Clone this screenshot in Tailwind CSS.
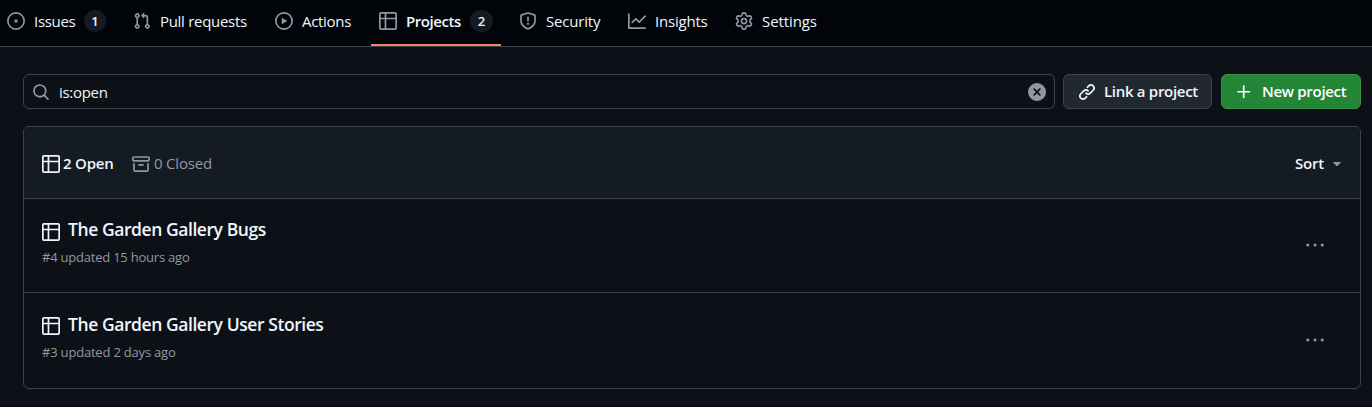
<!DOCTYPE html>
<html lang="en">
<head>
<meta charset="utf-8">
<title>Projects</title>
<script src="https://cdn.jsdelivr.net/npm/@tailwindcss/browser@4"></script>
</head>
<body class="h-[407px] w-[1372px] overflow-hidden border-b border-[#010409] bg-[#0d1117] font-['Open_Sans','Noto_Sans',sans-serif] text-[15px] text-[#f0f6fc]">
<svg class="hidden">
  <symbol id="issue" viewBox="0 0 16 16"><path d="M8 9.5a1.5 1.5 0 1 0 0-3 1.5 1.5 0 0 0 0 3Z"/><path d="M8 0a8 8 0 1 1 0 16A8 8 0 0 1 8 0ZM1.5 8a6.5 6.5 0 1 0 13 0 6.5 6.5 0 0 0-13 0Z"/></symbol>
  <symbol id="pull" viewBox="0 0 16 16"><path d="M1.5 3.25a2.25 2.25 0 1 1 3 2.122v5.256a2.251 2.251 0 1 1-1.5 0V5.372A2.25 2.25 0 0 1 1.5 3.25Zm5.677-.177L9.573.677A.25.25 0 0 1 10 .854V2.5h1A2.5 2.5 0 0 1 13.5 5v5.628a2.251 2.251 0 1 1-1.5 0V5a1 1 0 0 0-1-1h-1v1.646a.25.25 0 0 1-.427.177L7.177 3.427a.25.25 0 0 1 0-.354ZM3.75 2.5a.75.75 0 1 0 0 1.5.75.75 0 0 0 0-1.5Zm0 9.5a.75.75 0 1 0 0 1.5.75.75 0 0 0 0-1.5Zm8.25.75a.75.75 0 1 0 1.5 0 .75.75 0 0 0-1.5 0Z"/></symbol>
  <symbol id="play" viewBox="0 0 16 16"><path d="M8 0a8 8 0 1 1 0 16A8 8 0 0 1 8 0ZM1.5 8a6.5 6.5 0 1 0 13 0 6.5 6.5 0 0 0-13 0Zm4.879-2.773 4.264 2.559a.25.25 0 0 1 0 .428l-4.264 2.559A.25.25 0 0 1 6 10.559V5.442a.25.25 0 0 1 .379-.215Z"/></symbol>
  <symbol id="table" viewBox="0 0 16 16"><path d="M0 1.75C0 .784.784 0 1.75 0h12.5C15.216 0 16 .784 16 1.75v12.5A1.75 1.75 0 0 1 14.25 16H1.75A1.75 1.75 0 0 1 0 14.25ZM6.5 6.5v8h7.75a.25.25 0 0 0 .25-.25V6.5Zm8-1.5V1.75a.25.25 0 0 0-.25-.25H6.5V5Zm-13 1.5v7.75c0 .138.112.25.25.25H5v-8ZM5 5V1.5H1.75a.25.25 0 0 0-.25.25V5Z"/></symbol>
  <symbol id="shield" viewBox="0 0 16 16"><path d="M7.467.133a1.748 1.748 0 0 1 1.066 0l5.25 1.68A1.75 1.75 0 0 1 15 3.48V7c0 1.566-.32 3.182-1.303 4.682-.983 1.498-2.585 2.813-5.032 3.855a1.697 1.697 0 0 1-1.33 0c-2.447-1.042-4.049-2.357-5.032-3.855C1.32 10.182 1 8.566 1 7V3.48a1.75 1.75 0 0 1 1.217-1.667Zm.61 1.429a.25.25 0 0 0-.153 0l-5.25 1.68a.25.25 0 0 0-.174.238V7c0 1.358.275 2.666 1.057 3.86.784 1.194 2.121 2.34 4.366 3.297a.196.196 0 0 0 .154 0c2.245-.956 3.582-2.104 4.366-3.298C13.225 9.666 13.5 8.36 13.5 7V3.48a.251.251 0 0 0-.174-.237l-5.25-1.68ZM8.75 4.75v3a.75.75 0 0 1-1.5 0v-3a.75.75 0 0 1 1.5 0ZM9 10.5a1 1 0 1 1-2 0 1 1 0 0 1 2 0Z"/></symbol>
  <symbol id="graph" viewBox="0 0 16 16"><path d="M1.5 1.75V13.5h13.75a.75.75 0 0 1 0 1.5H.75a.75.75 0 0 1-.75-.75V1.75a.75.75 0 0 1 1.5 0Zm14.28 2.53-5.25 5.25a.75.75 0 0 1-1.06 0L7 7.06 4.28 9.78a.751.751 0 0 1-1.042-.018.751.751 0 0 1-.018-1.042l3.25-3.25a.75.75 0 0 1 1.06 0L10 7.94l4.72-4.72a.751.751 0 0 1 1.042.018.751.751 0 0 1 .018 1.042Z"/></symbol>
  <symbol id="gear" viewBox="0 0 16 16"><path d="M8 0a8.2 8.2 0 0 1 .701.031C9.444.095 9.99.645 10.16 1.29l.288 1.107c.018.066.079.158.212.224.231.114.454.243.668.386.123.082.233.09.299.071l1.103-.303c.644-.176 1.392.021 1.82.63.27.385.506.792.704 1.218.315.675.111 1.422-.364 1.891l-.814.806c-.049.048-.098.147-.088.294.016.257.016.515 0 .772-.01.147.038.246.088.294l.814.806c.475.469.679 1.216.364 1.891a7.977 7.977 0 0 1-.704 1.217c-.428.61-1.176.807-1.82.63l-1.102-.302c-.067-.019-.177-.011-.3.071a5.909 5.909 0 0 1-.668.386c-.133.066-.194.158-.211.224l-.29 1.106c-.168.646-.715 1.196-1.458 1.26a8.006 8.006 0 0 1-1.402 0c-.743-.064-1.289-.614-1.458-1.26l-.289-1.106c-.018-.066-.079-.158-.212-.224a5.738 5.738 0 0 1-.668-.386c-.123-.082-.233-.09-.299-.071l-1.103.303c-.644.176-1.392-.021-1.82-.63a8.12 8.12 0 0 1-.704-1.218c-.315-.675-.111-1.422.363-1.891l.815-.806c.05-.048.098-.147.088-.294a6.214 6.214 0 0 1 0-.772c.01-.147-.038-.246-.088-.294l-.815-.806C.635 6.045.431 5.298.746 4.623a7.92 7.92 0 0 1 .704-1.217c.428-.61 1.176-.807 1.82-.63l1.102.302c.067.019.177.011.3-.071.214-.143.437-.272.668-.386.133-.066.194-.158.211-.224l.29-1.106C6.009.645 6.556.095 7.299.03 7.53.01 7.764 0 8 0Zm-.571 1.525c-.036.003-.108.036-.137.146l-.289 1.105c-.147.561-.549.967-.998 1.189-.173.086-.34.183-.5.29-.417.278-.97.423-1.529.27l-1.103-.303c-.109-.03-.175.016-.195.045-.22.312-.412.644-.573.99-.014.031-.021.11.059.19l.815.806c.411.406.562.957.53 1.456a4.709 4.709 0 0 0 0 .582c.032.499-.119 1.05-.53 1.456l-.815.806c-.081.08-.073.159-.059.19.162.346.353.677.573.989.02.03.085.076.195.046l1.102-.303c.56-.153 1.113-.008 1.53.27.161.107.328.204.501.29.447.222.85.629.997 1.189l.289 1.105c.029.109.101.143.137.146a6.6 6.6 0 0 0 1.142 0c.036-.003.108-.036.137-.146l.289-1.105c.147-.561.549-.967.998-1.189.173-.086.34-.183.5-.29.417-.278.97-.423 1.529-.27l1.103.303c.109.029.175-.016.195-.045.22-.313.411-.644.573-.99.014-.031.021-.11-.059-.19l-.815-.806c-.411-.406-.562-.957-.53-1.456a4.709 4.709 0 0 0 0-.582c-.032-.499.119-1.05.53-1.456l.815-.806c.081-.08.073-.159.059-.19a6.464 6.464 0 0 0-.573-.989c-.02-.03-.085-.076-.195-.046l-1.102.303c-.56.153-1.113.008-1.53-.27a4.44 4.44 0 0 0-.501-.29c-.447-.222-.85-.629-.997-1.189l-.289-1.105c-.029-.11-.101-.143-.137-.146a6.6 6.6 0 0 0-1.142 0ZM11 8a3 3 0 1 1-6 0 3 3 0 0 1 6 0ZM9.5 8a1.5 1.5 0 1 0-3.001.001A1.5 1.5 0 0 0 9.5 8Z"/></symbol>
  <symbol id="search" viewBox="0 0 16 16"><path d="M10.68 11.74a6 6 0 0 1-7.922-8.982 6 6 0 0 1 8.982 7.922l3.04 3.04a.749.749 0 0 1-.326 1.275.749.749 0 0 1-.734-.215ZM11.5 7a4.499 4.499 0 1 0-8.997 0A4.499 4.499 0 0 0 11.5 7Z"/></symbol>
  <symbol id="clear" viewBox="0 0 16 16"><path d="M2.343 13.657A8 8 0 1 1 13.658 2.343 8 8 0 0 1 2.343 13.657ZM6.03 4.97a.751.751 0 0 0-1.042.018.751.751 0 0 0-.018 1.042L6.94 8 4.97 9.97a.749.749 0 0 0 .326 1.275.749.749 0 0 0 .734-.215L8 9.06l1.97 1.97a.749.749 0 0 0 1.275-.326.749.749 0 0 0-.215-.734L9.06 8l1.97-1.97a.749.749 0 0 0-.326-1.275.749.749 0 0 0-.734.215L8 6.94Z"/></symbol>
  <symbol id="link" viewBox="0 0 16 16"><path d="m7.775 3.275 1.25-1.25a3.5 3.5 0 1 1 4.95 4.95l-2.5 2.5a3.5 3.5 0 0 1-4.95 0 .751.751 0 0 1 .018-1.042.751.751 0 0 1 1.042-.018 1.998 1.998 0 0 0 2.83 0l2.5-2.5a2.002 2.002 0 0 0-2.83-2.83l-1.25 1.25a.751.751 0 0 1-1.042-.018.751.751 0 0 1-.018-1.042Zm-4.69 9.64a1.998 1.998 0 0 0 2.83 0l1.25-1.25a.751.751 0 0 1 1.042.018.751.751 0 0 1 .018 1.042l-1.25 1.25a3.5 3.5 0 1 1-4.95-4.95l2.5-2.5a3.5 3.5 0 0 1 4.95 0 .751.751 0 0 1-.018 1.042.751.751 0 0 1-1.042.018 1.998 1.998 0 0 0-2.83 0l-2.5 2.5a1.998 1.998 0 0 0 0 2.83Z"/></symbol>
  <symbol id="plus" viewBox="0 0 16 16"><path d="M7.75 2a.75.75 0 0 1 .75.75V7h4.25a.75.75 0 0 1 0 1.5H8.5v4.25a.75.75 0 0 1-1.5 0V8.5H2.75a.75.75 0 0 1 0-1.5H7V2.75A.75.75 0 0 1 7.75 2Z"/></symbol>
  <symbol id="archive" viewBox="0 0 16 16"><path d="M0 2.75C0 1.784.784 1 1.75 1h12.5c.966 0 1.75.784 1.75 1.75v1.5A1.75 1.75 0 0 1 14.25 6H1.75A1.75 1.75 0 0 1 0 4.25ZM1.75 7a.75.75 0 0 1 .75.75v5.5c0 .138.112.25.25.25h10.5a.25.25 0 0 0 .25-.25v-5.5a.75.75 0 0 1 1.5 0v5.5A1.75 1.75 0 0 1 13.25 15H2.75A1.75 1.75 0 0 1 1 13.25v-5.5A.75.75 0 0 1 1.75 7Zm0-4.5a.25.25 0 0 0-.25.25v1.5c0 .138.112.25.25.25h12.5a.25.25 0 0 0 .25-.25v-1.5a.25.25 0 0 0-.25-.25ZM6.25 8h3.5a.75.75 0 0 1 0 1.5h-3.5a.75.75 0 0 1 0-1.5Z"/></symbol>
  <symbol id="caret" viewBox="0 0 16 16"><path d="m4.427 7.427 3.396 3.396a.25.25 0 0 0 .354 0l3.396-3.396A.25.25 0 0 0 11.396 7H4.604a.25.25 0 0 0-.177.427Z"/></symbol>
  <symbol id="dots" viewBox="0 0 18 4"><circle cx="1.8" cy="2" r="1.5"/><circle cx="9" cy="2" r="1.5"/><circle cx="16.2" cy="2" r="1.5"/></symbol>
</svg>

<nav class="flex h-[47px] border-b border-[#3d444d] bg-[#010409] pl-[7px] leading-[43px] whitespace-nowrap">
  <a class="flex w-[126px]"><svg class="mt-3 mr-[9px] size-[18px] shrink-0 fill-[#9198a1]"><use href="#issue"/></svg><span class="w-[50px] tracking-[-0.3px]">Issues</span><span class="mt-[10px] size-[22px] rounded-full bg-[#151b23] text-center text-[13px] leading-[22px] font-semibold">1</span></a>
  <a class="flex w-[142px]"><svg class="mt-3 mr-[9px] size-[18px] shrink-0 fill-[#9198a1]"><use href="#pull"/></svg><span class="tracking-[-0.3px]">Pull requests</span></a>
  <a class="flex w-[96px]"><svg class="mt-3 mr-[9px] size-[18px] shrink-0 fill-[#9198a1]"><use href="#play"/></svg><span class="tracking-[-0.3px]">Actions</span></a>
  <a class="mr-[18px] flex h-[46px] w-[130px] border-b-2 border-[#f78166] pl-2"><svg class="mt-3 mr-[9px] size-[18px] shrink-0 fill-[#9198a1]"><use href="#table"/></svg><span class="w-[64px] font-semibold tracking-[-0.45px]">Projects</span><span class="mt-[10px] h-[22px] w-[23px] rounded-full bg-[#151b23] text-center text-[13px] leading-[22px] font-semibold">2</span></a>
  <a class="flex w-[109px]"><svg class="mt-3 mr-[9px] size-[18px] shrink-0 fill-[#9198a1]"><use href="#shield"/></svg><span class="tracking-[-0.2px]">Security</span></a>
  <a class="flex w-[107px]"><svg class="mt-3 mr-[9px] size-[18px] shrink-0 fill-[#9198a1]"><use href="#graph"/></svg><span class="tracking-[-0.2px]">Insights</span></a>
  <a class="flex"><svg class="mt-3 mr-[9px] size-[18px] shrink-0 fill-[#9198a1]"><use href="#gear"/></svg><span class="tracking-[-0.1px]">Settings</span></a>
</nav>

<main class="pt-[27px] pr-[11px] pl-[23px] whitespace-nowrap">
  <div class="flex h-[35px]">
    <div class="mr-2 flex w-[1032px] items-center rounded-md border border-[#3d444d] pr-[8px] pl-2">
      <svg class="size-[18px] fill-[#9198a1]"><use href="#search"/></svg>
      <span class="mt-[2px] ml-[9px] flex-1 tracking-[-0.3px]">is:open</span>
      <svg class="size-[18px] fill-[#9198a1]"><use href="#clear"/></svg>
    </div>
    <button class="mr-[9px] flex w-[149px] items-center rounded-md border border-[#3d444d] bg-[#212830] pl-[14px] font-semibold"><svg class="mr-[8px] size-[18px] fill-[#f0f6fc]"><use href="#link"/></svg><span class="tracking-[-0.3px]">Link a project</span></button>
    <button class="flex w-[140px] items-center rounded-md border border-[#39914a] bg-[#238636] pl-[13px] font-semibold text-white"><svg class="mr-[9px] size-[18px] fill-white"><use href="#plus"/></svg><span class="tracking-[-0.3px]">New project</span></button>
  </div>

  <section class="mt-[17px] h-[263px] overflow-hidden rounded-md border border-[#3d444d]">
    <header class="flex h-[72px] items-center border-b border-[#3d444d] bg-[#151b23] pr-[14px] pl-[18px]">
      <svg class="mt-[2px] mr-[3px] size-[18px] fill-[#f0f6fc]"><use href="#table"/></svg>
      <span class="mt-[2px] w-[69px] font-semibold tracking-[-0.2px]">2 Open</span>
      <svg class="mt-[2px] mr-[4px] size-[18px] fill-[#9198a1]"><use href="#archive"/></svg>
      <span class="mt-[2px] flex-1 tracking-[-0.2px] text-[#9198a1]">0 Closed</span>
      <span class="mt-[2px] font-semibold tracking-[-0.2px]">Sort</span>
      <svg class="ml-[4px] size-[18px] fill-[#9198a1]"><use href="#caret"/></svg>
    </header>
    <article class="flex h-[94px] items-center justify-between border-b border-[#3d444d] pr-[36px] pl-[18px]">
      <div class="-mt-[8px]">
        <div class="flex h-[31px] items-center"><svg class="mt-[4px] mr-[8px] size-[18px] fill-[#f0f6fc]"><use href="#table"/></svg><h2 class="text-[17.5px] font-semibold tracking-[-0.43px]">The Garden Gallery Bugs</h2></div>
        <p class="text-[13px] leading-6 tracking-[-0.22px] text-[#9198a1]">#4 updated 15 hours ago</p>
      </div>
      <svg class="-mt-[2px] h-1 w-[18px] fill-[#9198a1]"><use href="#dots"/></svg>
    </article>
    <article class="flex h-[95px] items-center justify-between pr-[36px] pl-[18px]">
      <div class="-mt-[8px]">
        <div class="flex h-[31px] items-center"><svg class="mt-[3px] mr-[8px] size-[18px] fill-[#f0f6fc]"><use href="#table"/></svg><h2 class="text-[17.5px] font-semibold tracking-[-0.43px]">The Garden Gallery User Stories</h2></div>
        <p class="text-[13px] leading-6 tracking-[-0.2px] text-[#9198a1]">#3 updated 2 days ago</p>
      </div>
      <svg class="-mt-[2px] h-1 w-[18px] fill-[#9198a1]"><use href="#dots"/></svg>
    </article>
  </section>
</main>
</body>
</html>
